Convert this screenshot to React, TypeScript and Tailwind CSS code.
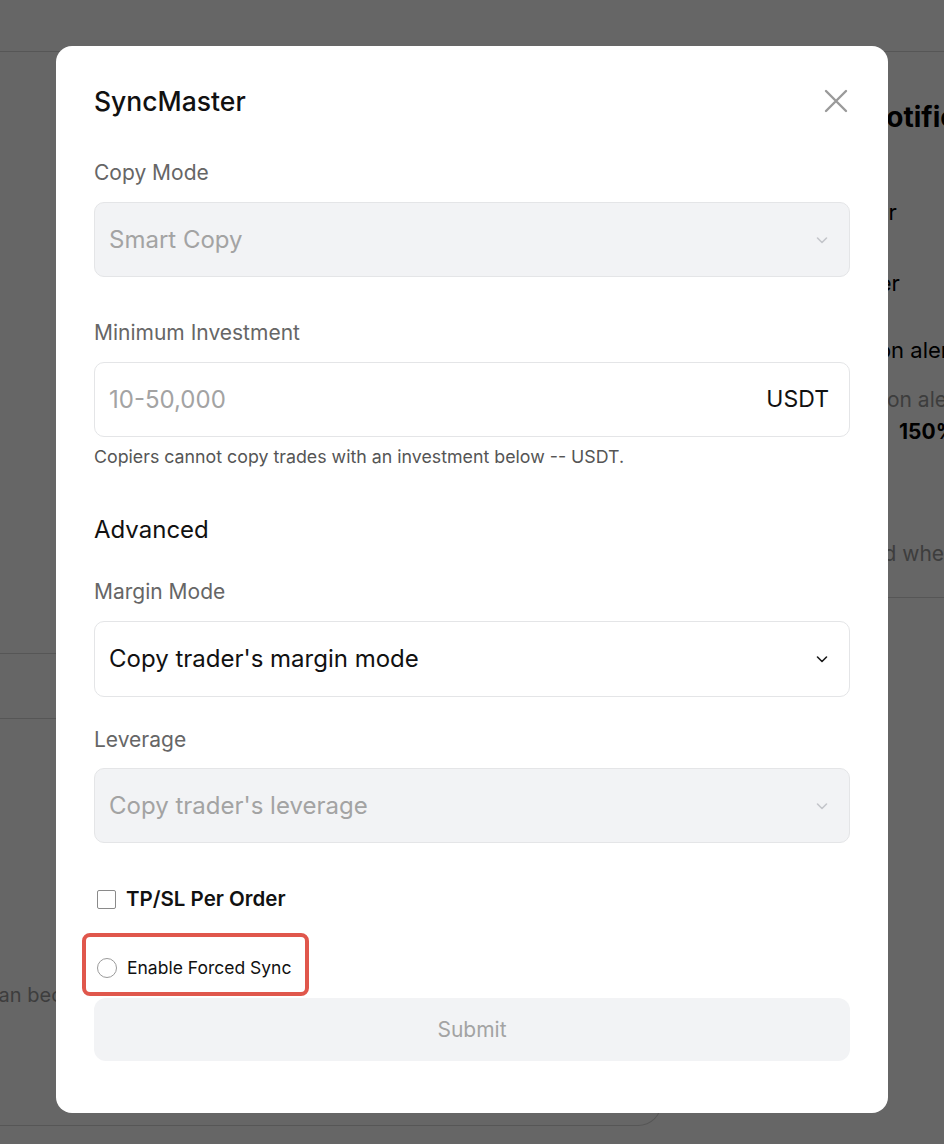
function Chevron({ muted }: { muted?: boolean }) {
  return (
    <svg
      width="14"
      height="14"
      viewBox="0 0 14 14"
      fill="none"
      className={muted ? "text-[#c4c6ca]" : "text-[#1a1a1a]"}
    >
      <path d="M2.5 5l4.5 4.5L11.5 5" stroke="currentColor" strokeWidth="1.6" strokeLinecap="round" strokeLinejoin="round" />
    </svg>
  );
}

function CloseIcon() {
  return (
    <svg width="24" height="24" viewBox="0 0 24 24" fill="none" className="text-[#9a9a9a]">
      <path d="M2 2l20 20M22 2L2 22" stroke="currentColor" strokeWidth="2.4" strokeLinecap="round" />
    </svg>
  );
}

function FieldLabel({ children }: { children: React.ReactNode }) {
  return <div className="h-[28px] text-[21px] leading-[28px] text-[#666666]">{children}</div>;
}

function SelectBox({ value, disabled }: { value: string; disabled?: boolean }) {
  return (
    <div
      className={
        disabled
          ? "flex h-[75px] items-center justify-between rounded-[10px] border border-[#e4e5e7] bg-[#f2f3f5] pl-[14px] pr-[20px]"
          : "flex h-[76px] items-center justify-between rounded-[10px] border border-[#e4e5e7] bg-white pl-[14px] pr-[20px]"
      }
    >
      <span className={disabled ? "text-[24px] text-[#a3a3a3]" : "text-[24px] text-[#111111]"}>{value}</span>
      <Chevron muted={disabled} />
    </div>
  );
}

function BackgroundPage() {
  return (
    <div className="flex h-full flex-col">
      <div className="h-[52px] shrink-0 border-b border-[#d6d6d6]" />
      <div className="flex flex-1">
        {/* left column, mostly under the modal */}
        <div className="flex w-[662px] shrink-0 flex-col">
          <div className="h-[602px] border-b border-[#d6d6d6]" />
          <div className="h-[65px] border-b border-[#d6d6d6]" />
          <div className="flex h-[407px] flex-col justify-end rounded-br-[24px] border-b border-r border-[#d6d6d6] pb-[116px]">
            <p className="ml-[-13px] text-[20px] leading-[28px] text-[#9a9a9a]">can become inactive after</p>
          </div>
        </div>
        {/* right column: notifications */}
        <div className="ml-[203px] flex h-[546px] flex-1 flex-col border-b border-[#d6d6d6]">
          <h3 className="mt-[47px] whitespace-nowrap text-[28px] font-bold leading-[36px] text-black">Notifications</h3>
          <p className="mt-[63px] ml-[-77px] whitespace-nowrap text-[22px] leading-[28px] text-black">New order</p>
          <p className="mt-[43px] ml-[-86px] whitespace-nowrap text-[22px] leading-[28px] text-black">Close order</p>
          <p className="mt-[39px] ml-[-75px] whitespace-nowrap text-[22px] leading-[28px] text-black">Liquidation alert</p>
          <p className="mt-[22px] ml-[-62px] whitespace-nowrap text-[21px] leading-[28px] text-[#9a9a9a]">Liquidation alert ratio</p>
          <p className="mt-[4px] ml-[34px] whitespace-nowrap text-[21px] font-bold leading-[28px] text-black">150%</p>
          <p className="mt-[94px] ml-[-47px] whitespace-nowrap text-[21px] leading-[28px] text-[#9a9a9a]">Notified when</p>
        </div>
      </div>
    </div>
  );
}

export default function App() {
  return (
    <div className="relative h-[1144px] w-[944px] overflow-hidden bg-white font-['Inter',sans-serif]">
      <BackgroundPage />

      <div className="absolute inset-0 flex justify-center bg-black/60 pt-[46px]">
        <div className="flex h-[1067px] w-[832px] flex-col rounded-[16px] bg-white px-[38px] pt-[38px]">
          <div className="flex h-[34px] items-center justify-between">
            <h2 className="text-[26.5px] font-medium leading-[34px] text-[#111111]">SyncMaster</h2>
            <span className="mr-[2px]">
              <CloseIcon />
            </span>
          </div>

          <div className="mt-[41px]">
            <FieldLabel>Copy Mode</FieldLabel>
          </div>
          <div className="mt-[15px]">
            <SelectBox value="Smart Copy" disabled />
          </div>

          <div className="mt-[42px]">
            <FieldLabel>Minimum Investment</FieldLabel>
          </div>
          <div className="mt-[15px] flex h-[75px] items-center justify-between rounded-[10px] border border-[#e4e5e7] bg-white pl-[14px] pr-[20px]">
            <span className="text-[24px] text-[#a3a3a3]">10-50,000</span>
            <span className="text-[23px] text-[#111111]">USDT</span>
          </div>
          <p className="mt-[9px] h-[22px] text-[17.8px] leading-[22px] text-[#555555]">
            Copiers cannot copy trades with an investment below -- USDT.
          </p>

          <h3 className="mt-[46px] h-[32px] text-[24px] leading-[32px] text-[#111111]">Advanced</h3>

          <div className="mt-[32px]">
            <FieldLabel>Margin Mode</FieldLabel>
          </div>
          <div className="mt-[15px]">
            <SelectBox value="Copy trader's margin mode" />
          </div>

          <div className="mt-[29px]">
            <FieldLabel>Leverage</FieldLabel>
          </div>
          <div className="mt-[14px]">
            <SelectBox value="Copy trader's leverage" disabled />
          </div>

          <label className="mt-[42px] flex h-[28px] items-center gap-[10px] pl-[3px]">
            <span className="h-[19px] w-[19px] rounded-[2px] border-[1.5px] border-[#8a8a8a]" />
            <span className="text-[20.5px] font-semibold leading-[28px] text-[#111111]">TP/SL Per Order</span>
          </label>

          <div className="relative mt-[41px] flex h-[28px] items-center gap-[10px] pl-[3px]">
            <span className="h-[20px] w-[20px] rounded-full border-[1.5px] border-[#9a9a9a]" />
            <span className="text-[17.5px] leading-[28px] text-[#111111]">Enable Forced Sync</span>
            {/* highlight annotation */}
            <div className="absolute left-[-12px] top-[-21px] h-[63px] w-[227px] rounded-[8px] border-[4px] border-[#e0574c]" />
          </div>

          <button className="mt-[16px] flex h-[63px] items-center justify-center rounded-[12px] bg-[#f2f3f5] text-[21px] text-[#a3a3a3]">
            Submit
          </button>
        </div>
      </div>
    </div>
  );
}
